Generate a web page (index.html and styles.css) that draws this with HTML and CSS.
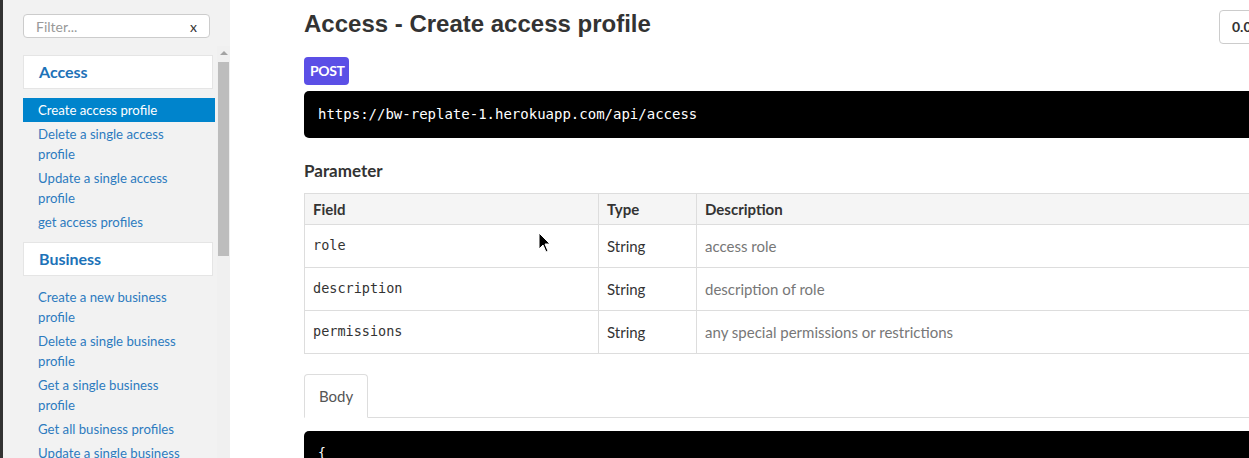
FILE: index.html
```html
<!DOCTYPE html>
<html>
<head>
<meta charset="utf-8">
<link rel="stylesheet" href="styles.css">
</head>
<body>
<div class="page">
  <aside class="sidebar">
    <div class="filter">
      <span class="filter-ph">Filter...</span>
      <span class="filter-x">x</span>
    </div>
    <div class="nav-wrap">
      <nav class="nav">
        <div class="nav-header">Access</div>
        <a class="nav-item active">Create access profile</a>
        <a class="nav-item">Delete a single access profile</a>
        <a class="nav-item">Update a single access profile</a>
        <a class="nav-item">get access profiles</a>
        <div class="nav-header">Business</div>
        <a class="nav-item">Create a new business profile</a>
        <a class="nav-item">Delete a single business profile</a>
        <a class="nav-item">Get a single business profile</a>
        <a class="nav-item">Get all business profiles</a>
        <a class="nav-item">Update a single business profile</a>
      </nav>
      <div class="scrollbar">
        <div class="sb-arrow"></div>
        <div class="sb-thumb"></div>
      </div>
    </div>
  </aside>
  <main class="main">
    <div class="title-row">
      <h1 class="title">Access - Create access profile</h1>
      <div class="version">0.0.0</div>
    </div>
    <span class="badge">POST</span>
    <pre class="url">https://bw-replate-1.herokuapp.com/api/access</pre>
    <h2 class="section">Parameter</h2>
    <table class="params">
      <thead>
        <tr><th class="c-field">Field</th><th class="c-type">Type</th><th>Description</th></tr>
      </thead>
      <tbody>
        <tr><td class="code">role</td><td>String</td><td class="desc">access role</td></tr>
        <tr><td class="code">description</td><td>String</td><td class="desc">description of role</td></tr>
        <tr><td class="code">permissions</td><td>String</td><td class="desc">any special permissions or restrictions</td></tr>
      </tbody>
    </table>
    <div class="tabs"><span class="tab">Body</span></div>
    <pre class="body-code">{</pre>
  </main>
</div>
<svg class="cursor" width="14" height="22" viewBox="0 0 14 22"><path d="M1 1 L1 17 L5 13 L8 20 L10 19 L7 12 L12 12 Z" fill="#000" stroke="#fff" stroke-width="1"/></svg>
</body>
</html>
```
FILE: styles.css
```css
html, body { margin: 0; padding: 0; }
body {
  width: 1249px;
  height: 458px;
  overflow: hidden;
  background: #fff;
  font-family: "Source Sans Pro", Lato, "Noto Sans", sans-serif;
  color: #333;
  position: relative;
}
.page {
  display: flex;
  height: 458px;
  overflow: hidden;
}
.sidebar {
  width: 227px;
  flex: 0 0 227px;
  border-left: 3px solid #333;
  background: #f2f2f2;
  display: flex;
  flex-direction: column;
  overflow: hidden;
}
.filter {
  flex: 0 0 auto;
  margin: 14px 0 0 20px;
  width: 187px;
  height: 24px;
  border: 1px solid #ccc;
  border-radius: 4px;
  background: #fff;
  display: flex;
  justify-content: space-between;
  align-items: center;
  padding: 0 12px 0 12px;
  box-sizing: border-box;
  font-size: 14px;
}
.filter-ph { color: #999; }
.filter-x { color: #333; font-size: 14px; }
.nav-wrap {
  display: flex;
  margin-top: 8px;
  flex: 1 1 auto;
  min-height: 0;
}
.nav {
  padding-left: 20px;
  width: 192px;
  flex: 0 0 192px;
}
.nav-header {
  margin: 8px 0 9px 0;
  width: 190px;
  box-sizing: border-box;
  height: 34px;
  border: 1px solid #e5e5e5;
  background: #fff;
  color: #1d72b8;
  font-weight: 700;
  font-size: 16px;
  line-height: 32px;
  padding-left: 15px;
}
.nav-header:first-child { margin-top: 9px; }
.nav-item {
  display: block;
  padding: 2px 22px 2px 15px;
  line-height: 20px;
  font-size: 13.2px;
  color: #2d7bbf;
}
.nav-item.active {
  background: #0084cc;
  color: #fff;
}
.scrollbar {
  margin-left: 2px;
  width: 13px;
  flex: 0 0 13px;
  background: #f0f0f0;
  display: flex;
  flex-direction: column;
  align-items: center;
}
.sb-arrow {
  margin-top: 5px;
  width: 0; height: 0;
  border-left: 4px solid transparent;
  border-right: 4px solid transparent;
  border-bottom: 4px solid #a3a3a3;
}
.sb-thumb {
  margin-top: 7px;
  width: 11px;
  height: 194px;
  background: #bdbdbd;
}
.main {
  padding-left: 74px;
  width: 995px;
  flex: 0 0 995px;
}
.title-row {
  display: flex;
  justify-content: space-between;
  align-items: flex-start;
  margin-top: 10px;
}
.title {
  margin: 0;
  font-family: "Liberation Sans", Arial, sans-serif;
  font-size: 24px;
  font-weight: 700;
  line-height: 28px;
  color: #333;
}
.version {
  margin-top: 0;
  width: 80px;
  height: 34px;
  box-sizing: border-box;
  border: 1px solid #ccc;
  border-radius: 4px;
  font-weight: 700;
  font-size: 14px;
  line-height: 32px;
  padding-left: 12px;
}
.badge {
  display: inline-block;
  margin-top: 13px;
  background: #5b4fe6;
  color: #fff;
  font-weight: 700;
  font-size: 14px;
  letter-spacing: -0.4px;
  line-height: 28px;
  padding: 0 5px 0 6px;
  border-radius: 4px;
}
.url {
  margin: 6px 0 0 0;
  background: #000;
  color: #fff;
  border-radius: 5px;
  height: 47px;
  box-sizing: border-box;
  padding: 0 14px;
  font-family: "DejaVu Sans Mono", monospace;
  font-size: 14px;
  line-height: 47px;
}
.section {
  margin: 21px 0 0 0;
  font-size: 17px;
  font-weight: 700;
  line-height: 24px;
}
.params {
  margin-top: 10px;
  width: 100%;
  border-collapse: collapse;
  font-size: 15px;
}
.params th, .params td {
  border: 1px solid #ddd;
  text-align: left;
  padding: 0 8px;
}
.params th {
  background: #f5f5f5;
  height: 30px;
  line-height: 20px;
  font-weight: 700;
}
.params td {
  padding: 11px 8px;
  line-height: 20px;
}
.c-field { width: 277px; }
.c-type { width: 81px; }
.params td.code {
  font-family: "DejaVu Sans Mono", monospace;
  font-size: 13.5px;
  padding-bottom: 12px;
  padding-top: 10px;
}
.desc { color: #777; }
.tabs {
  margin-top: 20px;
  border-bottom: 1px solid #ddd;
  display: flex;
}
.tab {
  display: block;
  margin-bottom: -1px;
  border: 1px solid #ddd;
  border-bottom-color: #fff;
  border-radius: 4px 4px 0 0;
  background: #fff;
  padding: 0 14px;
  line-height: 42px;
  font-size: 15px;
  color: #555;
}
.body-code {
  margin: 13px 0 0 0;
  background: #000;
  color: #fff;
  border-radius: 5px;
  height: 60px;
  padding: 14px 14px;
  font-family: "DejaVu Sans Mono", monospace;
  font-size: 13px;
}
.cursor {
  position: absolute;
  left: 538px;
  top: 232px;
}
```
